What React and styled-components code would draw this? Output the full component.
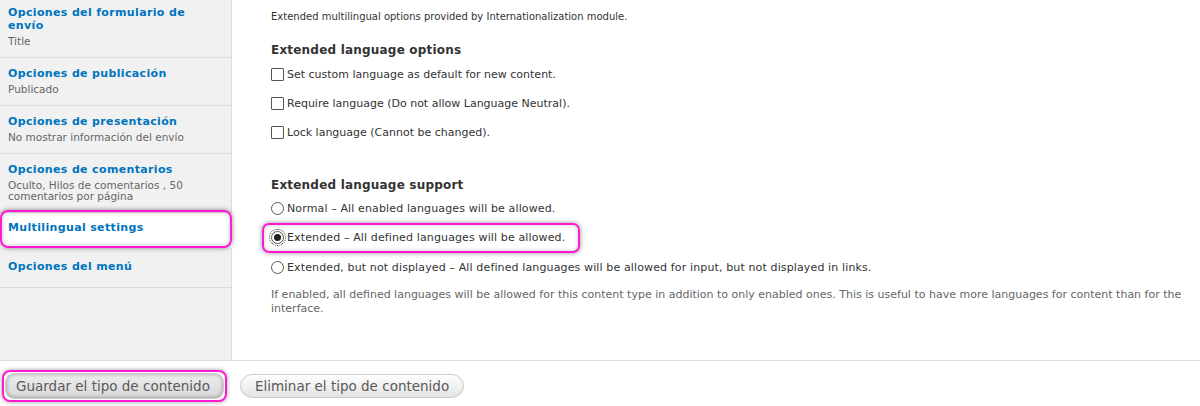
import React from "react";
import styled, { createGlobalStyle } from "styled-components";

const GlobalStyle = createGlobalStyle`
  html, body {
    margin: 0;
    padding: 0;
    background: #fff;
  }
  body {
    font-family: "DejaVu Sans", Verdana, sans-serif;
    color: #333;
    overflow: hidden;
  }
`;

const Page = styled.div`
  width: 1200px;
  height: 406px;
  display: flex;
  flex-direction: column;
`;

const Tabs = styled.div`
  display: flex;
  height: 360px;
  border-bottom: 1px solid #dcdcdc;
`;

const Sidebar = styled.ul`
  list-style: none;
  margin: 0;
  padding: 0;
  width: 231px;
  flex: 0 0 231px;
  background: #f1f1f1;
  border-right: 1px solid #dcdcdc;
`;

const TabItem = styled.li`
  position: relative;
  padding: ${(p) =>
    p.$selected ? "8px 8px 13px" : p.$single ? "12px 8px 14px" : "9px 8px 10px"};
  border-bottom: 1px solid #dcdcdc;
  background: ${(p) => (p.$selected ? "#fff" : "transparent")};

  &:first-child {
    padding-top: 6px;
  }

  ${(p) =>
    p.$selected &&
    `
    border-bottom-color: transparent;
    margin-right: -1px;
    &::after {
      content: "";
      position: absolute;
      left: 0;
      right: 0;
      top: -3px;
      bottom: -1px;
      border: 2px solid #ff19d1;
      border-radius: 8px;
      box-shadow: 0 0 5px rgba(0, 0, 0, 0.45), inset 0 0 4px rgba(0, 0, 0, 0.25);
    }
  `}
`;

const TabTitle = styled.a`
  display: block;
  position: relative;
  z-index: 1;
  color: #0074bd;
  font-weight: bold;
  font-size: 11px;
  line-height: 13px;
  letter-spacing: 0.35px;
  text-decoration: none;
`;

const TabSummary = styled.span`
  display: block;
  margin-top: 4px;
  color: #666;
  font-size: 10.5px;
  line-height: 11px;
`;

const Pane = styled.div`
  flex: 1;
  padding: 10px 8px 0 39px;
  font-size: 11px;
  line-height: 13px;
  color: #333;
`;

const Intro = styled.p`
  margin: 0 0 20px;
  font-size: 10px;
`;

const Heading = styled.h3`
  margin: 0 0 ${(p) => p.$gap || 11}px;
  font-size: 12px;
  line-height: 14px;
  font-weight: bold;
  color: #333;
  letter-spacing: 0.2px;
`;

const OptionRow = styled.div`
  display: flex;
  align-items: center;
  height: 13px;
  white-space: nowrap;
  letter-spacing: ${(p) => (p.$radio ? "0.13px" : "0")};
  margin-bottom: ${(p) => p.$gap || 16}px;
`;

const Box = styled.span`
  flex: 0 0 auto;
  width: 11px;
  height: 11px;
  border: 1px solid #555;
  background: #fff;
  margin-right: 3px;
  border-radius: ${(p) => (p.$round ? "50%" : "1px")};
  position: relative;
  box-sizing: content-box;
  ${(p) =>
    p.$checked &&
    `
    outline: 1px dotted #333;
    outline-offset: 1px;
    &::after {
      content: "";
      position: absolute;
      left: 2px;
      top: 2px;
      width: 7px;
      height: 7px;
      border-radius: 50%;
      background: #222;
    }
  `}
`;

const Mark = styled.span`
  display: inline-flex;
  align-items: center;
  padding: 6px 13px 7px 7px;
  margin: -8px -15px -9px -9px;
  border: 2px solid #ff19d1;
  border-radius: 7px;
  box-shadow: 0 0 5px rgba(0, 0, 0, 0.45), inset 0 0 4px rgba(0, 0, 0, 0.2);
`;

const Section = styled.div`
  margin-top: ${(p) => p.$top || 0}px;
`;

const Description = styled.div`
  color: #666;
  font-size: 11px;
  line-height: 14px;
  margin-top: -2px;
`;

const Actions = styled.div`
  display: flex;
  align-items: center;
  gap: 16px;
  padding: 12px 0 0 5px;
`;

const Button = styled.button`
  font-family: "DejaVu Sans", Verdana, sans-serif;
  font-size: 13.5px;
  color: #5a5a5a;
  height: 24px;
  padding: 0 14px;
  border: 1px solid #ccc;
  border-radius: 12px;
  background: linear-gradient(#fefefe, #e4e4e4);
  cursor: pointer;
`;

const ButtonMark = styled.span`
  display: inline-flex;
  padding: 1px;
  margin: -3px;
  border: 2px solid #ff19d1;
  border-radius: 8px;
  box-shadow: 0 0 4px rgba(0, 0, 0, 0.4);

  ${Button} {
    height: 26px;
    padding: 0 13px 0 10px;
    border-radius: 9px;
    background: linear-gradient(#eee, #d8d8d8);
    box-shadow: inset 0 0 4px rgba(0, 0, 0, 0.35);
  }
`;

const tabs = [
  { title: "Opciones del formulario de envío", summary: "Title" },
  { title: "Opciones de publicación", summary: "Publicado" },
  { title: "Opciones de presentación", summary: "No mostrar información del envío" },
  {
    title: "Opciones de comentarios",
    summary: "Oculto, Hilos de comentarios , 50 comentarios por página",
  },
  { title: "Multilingual settings", selected: true },
  { title: "Opciones del menú" },
];

const checks = [
  "Set custom language as default for new content.",
  "Require language (Do not allow Language Neutral).",
  "Lock language (Cannot be changed).",
];

export default function App() {
  return (
    <Page>
      <GlobalStyle />
      <Tabs>
        <Sidebar>
          {tabs.map((t) => (
            <TabItem key={t.title} $selected={t.selected} $single={!t.summary}>
              <TabTitle href="#">{t.title}</TabTitle>
              {t.summary && <TabSummary>{t.summary}</TabSummary>}
            </TabItem>
          ))}
        </Sidebar>
        <Pane>
          <Intro>Extended multilingual options provided by Internationalization module.</Intro>
          <Heading>Extended language options</Heading>
          {checks.map((c) => (
            <OptionRow key={c}>
              <Box />
              {c}
            </OptionRow>
          ))}
          <Section $top={39}>
            <Heading $gap={10}>Extended language support</Heading>
            <OptionRow $radio>
              <Box $round />
              Normal – All enabled languages will be allowed.
            </OptionRow>
            <OptionRow $radio $gap={17}>
              <Mark>
                <Box $round $checked />
                Extended – All defined languages will be allowed.
              </Mark>
            </OptionRow>
            <OptionRow $radio>
              <Box $round />
              Extended, but not displayed – All defined languages will be allowed for input, but not displayed in links.
            </OptionRow>
            <Description>
              If enabled, all defined languages will be allowed for this content type in addition to only enabled ones. This is useful to have more languages for content than for the interface.
            </Description>
          </Section>
        </Pane>
      </Tabs>
      <Actions>
        <ButtonMark>
          <Button>Guardar el tipo de contenido</Button>
        </ButtonMark>
        <Button>Eliminar el tipo de contenido</Button>
      </Actions>
    </Page>
  );
}
